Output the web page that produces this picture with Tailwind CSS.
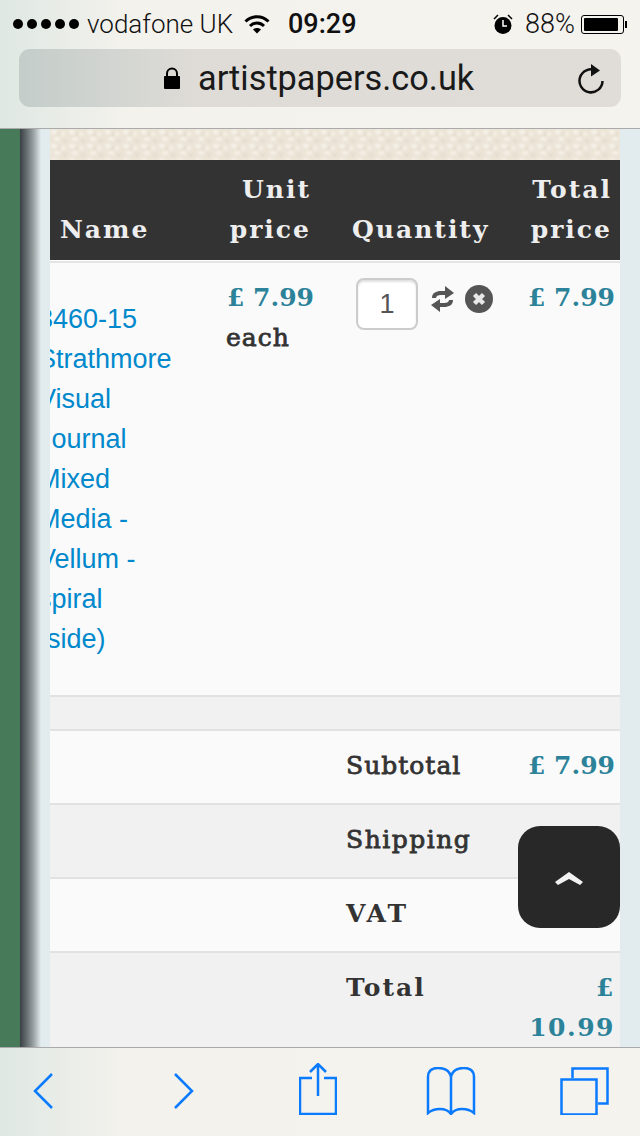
<!DOCTYPE html>
<html lang="en">
<head>
    <meta charset="UTF-8">
    <meta name="viewport" content="width=device-width, initial-scale=1.0">
    <title>artistpapers.co.uk</title>
    <script src="https://cdn.jsdelivr.net/npm/@tailwindcss/browser@4"></script>
</head>

<body class="bg-white">
    <div class="relative w-[640px] h-[1136px] overflow-hidden flex flex-col font-['Liberation_Sans',sans-serif]">

        <!-- safari top bar -->
        <header class="h-[129px] shrink-0 border-b border-[#aaaaaa] bg-gradient-to-r from-[#dfe8e3] via-[#f4f2ed] via-20% to-[#f5f3ee] font-['Roboto',sans-serif] text-[#111]">
            <div class="h-[48px] flex items-center pl-[13px] text-[26px] leading-none">
                <div class="flex gap-[4px]">
                    <span class="w-[10px] h-[10px] rounded-full bg-black"></span>
                    <span class="w-[10px] h-[10px] rounded-full bg-black"></span>
                    <span class="w-[10px] h-[10px] rounded-full bg-black"></span>
                    <span class="w-[10px] h-[10px] rounded-full bg-black"></span>
                    <span class="w-[10px] h-[10px] rounded-full bg-black"></span>
                </div>
                <span class="ml-[8px] w-[145px] font-light whitespace-nowrap">vodafone UK</span>
                <svg class="ml-[12px]" width="26" height="20" viewBox="0 0 26 20" fill="none" stroke="#000" stroke-width="3">
                    <path d="M1.500 7.500C8 1 18 1 24.500 7.500"/>
                    <path d="M6 12c4-4 10-4 14 0"/>
                    <path d="M13 19.500l-4-4c2-2 6-2 8 0z" fill="#000" stroke="none"/>
                </svg>
                <span class="ml-[18px] w-[70px] text-[27px] font-medium">09:29</span>
                <svg class="ml-[135px]" width="20" height="21" viewBox="0 0 20 21">
                    <circle cx="10" cy="11.500" r="8.500" fill="#000"/>
                    <path d="M10 6v6h4" fill="none" stroke="#fff" stroke-width="1.500"/>
                    <path d="M1 5l4-4M19 5l-4-4" stroke="#000" stroke-width="1.500"/>
                </svg>
                <span class="ml-[12px] w-[50px] text-[27px] font-light">88%</span>
                <div class="ml-[6px] w-[43px] h-[19px] border border-black rounded-[3px] p-[2px]">
                    <div class="w-[34px] h-full bg-black rounded-[1px]"></div>
                </div>
                <span class="ml-[1px] w-[2px] h-[7px] bg-black"></span>
            </div>
            <div class="mx-[19px] mt-[1px] h-[58px] w-[602px] rounded-[11px] bg-gradient-to-r from-[#c4cdca] via-[#dfdcd7] via-30% to-[#e0ddd8] flex items-center">
                <svg class="ml-[144px]" width="18" height="22" viewBox="0 0 18 22">
                    <path d="M4 10V6.500a5 5 0 0 1 10 0V10" fill="none" stroke="#000" stroke-width="2"/>
                    <rect x="1" y="9" width="16" height="13" rx="1" fill="#000"/>
                </svg>
                <span class="ml-[17px] w-[276px] text-[34.300px] leading-none text-[#1a1a1a] whitespace-nowrap">artistpapers.co.uk</span>
                <svg class="ml-[103px]" width="28" height="32" viewBox="0 0 28 32" fill="none" stroke="#111" stroke-width="2.500">
                    <path d="M19 8.500A11.500 11.500 0 1 0 25.500 19"/>
                    <path d="M14 2l9 6.500-9 6z" fill="#111" stroke="none"/>
                </svg>
            </div>
        </header>

        <!-- page -->
        <main class="flex-1 min-h-0 flex bg-[#e2ebee]">
            <div class="w-[20px] shrink-0 bg-[#477a58]"></div>
            <div class="w-[30px] shrink-0 bg-gradient-to-r from-[#3a4044] via-[#9aa2a4] via-45% to-[#e2ebee] to-70%"></div>

            <div class="w-[570px] shrink-0 flex flex-col font-['DejaVu_Serif',serif] text-[#333]">
                <div class="h-[31px] shrink-0 overflow-hidden bg-[#eee8db]">
                    <svg class="w-full h-[31px] blur-[1px]" xmlns="http://www.w3.org/2000/svg">
                        <defs>
                            <pattern id="paper" width="18" height="14" patternUnits="userSpaceOnUse">
                                <rect width="18" height="14" fill="#ece5d7"/>
                                <ellipse cx="4" cy="3" rx="3" ry="2" fill="#f6f2ea"/>
                                <ellipse cx="13" cy="5" rx="2.500" ry="2" fill="#f4efe5"/>
                                <ellipse cx="7" cy="10" rx="3" ry="1.800" fill="#f6f2ea"/>
                                <ellipse cx="15" cy="12" rx="2" ry="1.500" fill="#e2dacb"/>
                                <ellipse cx="9" cy="5" rx="1.500" ry="1.500" fill="#e2dacb"/>
                            </pattern>
                        </defs>
                        <rect width="570" height="31" fill="url(#paper)"/>
                    </svg>
                </div>

                <!-- table head -->
                <div class="h-[100px] shrink-0 bg-[#333] grid grid-cols-[172px_94px_204px_100px] items-end pb-[10px] text-[25px] leading-[40px] font-bold tracking-[2px] text-[#eeeeee]">
                    <div class="pl-[10px]">Name</div>
                    <div class="text-right pr-[5px]">Unit<br>price</div>
                    <div class="pl-[36px]">Quantity</div>
                    <div class="text-right pr-[8px]">Total<br>price</div>
                </div>

                <!-- product row -->
                <div class="h-[437px] shrink-0 bg-[#fafafa] border-t border-white border-b-2 border-b-[#e2e2e2]">
                    <div class="h-[2px] bg-[#e4e4e4]"></div>
                    <div class="grid grid-cols-[172px_94px_204px_100px]">
                        <div class="overflow-hidden pt-[36px]">
                            <a href="#" class="block ml-[-12px] font-['Liberation_Sans',sans-serif] text-[27px] leading-[40px] text-[#0088cc]">3460-15<br>Strathmore<br>Visual<br>Journal<br>Mixed<br>Media -<br>Vellum -<br>spiral<br>(side)</a>
                        </div>
                        <div class="pt-[15px] pl-[4px]">
                            <div class="pl-[1px] text-[25px] leading-[40px] font-bold text-[#2b8299] whitespace-nowrap">£ 7.99</div>
                            <div class="text-[25px] leading-[40px] font-normal tracking-[1px] [-webkit-text-stroke:0.8px_#333]">each</div>
                        </div>
                        <div class="flex items-start pt-[15px] pl-[40px]">
                            <input type="text" value="1" class="w-[62px] h-[52px] text-center text-[27px] text-[#555] font-['Liberation_Sans',sans-serif] bg-white border-2 border-[#cccccc] rounded-[8px] shadow-[inset_0_2px_2px_rgba(0,0,0,0.12)]">
                            <svg class="ml-[12px] mt-[7px] blur-[0.5px]" width="25" height="28" viewBox="0 0 25 28" fill="#555">
                                <path d="M2 13c0-5 4-7 9-7h4V1l9 7-9 6V10h-4c-3 0-5 1-5 3z"/>
                                <path d="M23 15c0 5-4 7-9 7h-4v5l-9-7 9-6v4h4c3 0 5-1 5-3z"/>
                            </svg>
                            <svg class="ml-[10px] mt-[7px] blur-[0.5px]" width="28" height="28" viewBox="0 0 28 28">
                                <circle cx="14" cy="14" r="14" fill="#555"/>
                                <path d="M9.500 9.500l9 9M18.500 9.500l-9 9" stroke="#e8e8e8" stroke-width="4.500"/>
                            </svg>
                        </div>
                        <div class="pt-[15px] pr-[5px] text-right text-[25px] leading-[40px] font-bold text-[#2b8299] whitespace-nowrap">£ 7.99</div>
                    </div>
                </div>

                <div class="h-[34px] shrink-0 bg-[#f1f1f1] border-b-2 border-b-[#e2e2e2]"></div>

                <!-- totals -->
                <div class="h-[74px] shrink-0 bg-[#fafafa] border-b-2 border-b-[#e2e2e2] flex justify-between pl-[296px] pr-[5px] pt-[15px] text-[25px] leading-[40px] font-bold">
                    <span class="font-normal tracking-[1px] [-webkit-text-stroke:0.8px_#333]">Subtotal</span>
                    <span class="text-[#2b8299]">£ 7.99</span>
                </div>
                <div class="h-[74px] shrink-0 bg-[#f1f1f1] border-b-2 border-b-[#e2e2e2] flex justify-between pl-[296px] pr-[5px] pt-[15px] text-[25px] leading-[40px] font-bold">
                    <span class="font-normal tracking-[1.500px] [-webkit-text-stroke:0.8px_#333]">Shipping</span>
                    <span class="text-[#2b8299]">£ 3.00</span>
                </div>
                <div class="h-[74px] shrink-0 bg-[#fafafa] border-b-2 border-b-[#e2e2e2] flex justify-between pl-[296px] pr-[5px] pt-[15px] text-[25px] leading-[40px] font-bold">
                    <span class="tracking-[3px]">VAT</span>
                    <span class="text-[#2b8299]">£ 0.00</span>
                </div>
                <div class="flex-1 bg-[#f1f1f1] flex justify-between pl-[296px] pr-[5px] pt-[15px] text-[25px] leading-[40px] font-bold">
                    <span class="tracking-[2px]">Total</span>
                    <span class="w-[90px] text-right tracking-[1.500px] text-[#2b8299]">£ 10.99</span>
                </div>
            </div>
        </main>

        <!-- back to top -->
        <a href="#" class="absolute left-[518px] top-[826px] w-[102px] h-[102px] rounded-[22px] bg-[#282828] flex items-center justify-center">
            <svg class="blur-[0.5px]" width="30" height="18" viewBox="0 0 30 18">
                <path d="M1 14L15 4l14 10-3 3-11-6-11 6z" fill="#f2f2f2"/>
            </svg>
        </a>

        <!-- safari bottom bar -->
        <footer class="h-[89px] shrink-0 border-t border-[#aaaaaa] bg-gradient-to-r from-[#dfe8e3] via-[#f4f2ed] via-20% to-[#f5f3ee] flex items-start pl-[33px] pt-[15px]">
            <svg class="mt-[10px]" width="20" height="36" viewBox="0 0 20 36" fill="none" stroke="#0a7aff" stroke-width="2.500">
                <path d="M19 1L2 18l17 17"/>
            </svg>
            <svg class="ml-[121px] mt-[10px]" width="20" height="36" viewBox="0 0 20 36" fill="none" stroke="#0a7aff" stroke-width="2.500">
                <path d="M1 1l17 17L1 35"/>
            </svg>
            <svg class="ml-[105px]" width="38" height="52" viewBox="0 0 38 52" fill="none" stroke="#0a7aff" stroke-width="2.500">
                <path d="M13 15H1v36h36V15H25"/>
                <path d="M19 33V1M11 9l8-8 8 8"/>
            </svg>
            <svg class="ml-[89px] mt-[4px]" width="50" height="48" viewBox="0 0 50 48" fill="none" stroke="#0a7aff" stroke-width="2.500">
                <path d="M25 9C23 3 18 1 12 1 6 1 2 4 2 10v36c6-5 18-6 23 1 5-7 17-6 23-1V10c0-6-4-9-10-9-6 0-11 2-13 8z"/>
                <path d="M25 9v38"/>
            </svg>
            <svg class="ml-[84px] mt-[4px]" width="49" height="48" viewBox="0 0 49 48" fill="none" stroke="#0a7aff" stroke-width="2.500">
                <path d="M12.500 11V1.500h35v35H38"/>
                <rect x="1.500" y="12.500" width="35" height="35"/>
            </svg>
        </footer>
    </div>
</body>
</html>
